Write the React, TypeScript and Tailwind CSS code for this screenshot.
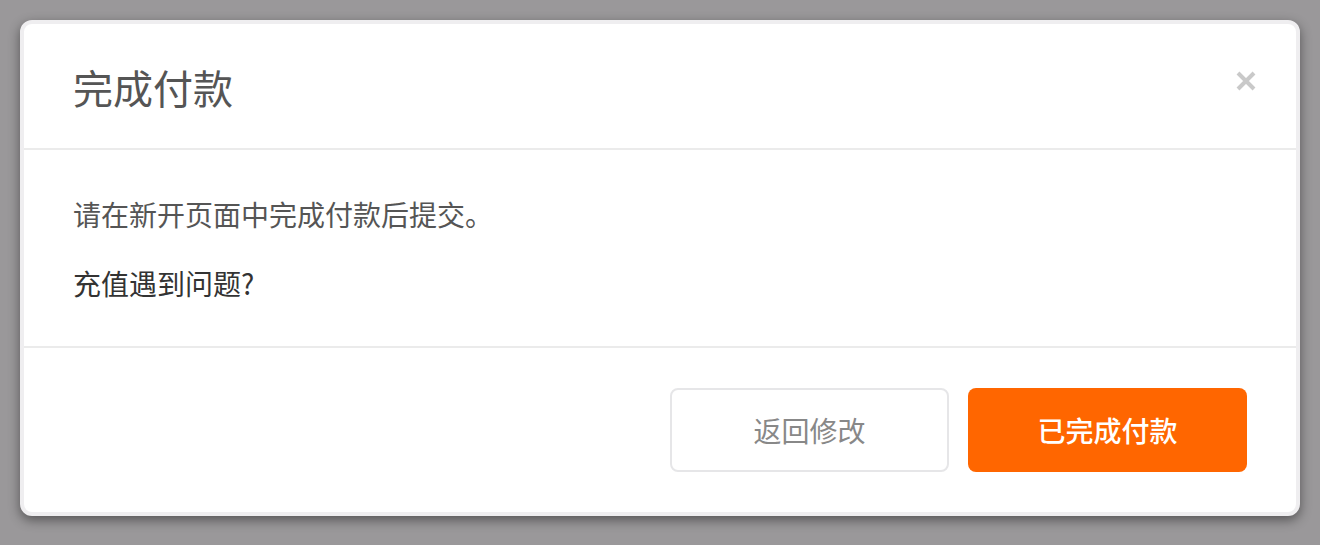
export default function App() {
  const font = { fontFamily: '"Noto Sans CJK SC", "Noto Sans", sans-serif' };

  return (
    <div className="w-[1320px] h-[545px] bg-[#9a989a] pt-[20px] px-[20px]" style={font}>
      <div className="w-[1280px] bg-white border-[4px] border-[#efeef0] rounded-[12px] shadow-[0_4px_12px_rgba(0,0,0,0.45)] overflow-hidden">
        {/* header */}
        <div className="h-[124px] flex items-center justify-between pl-[49px] pr-[40px] pt-[1px]">
          <h2 className="text-[40px] leading-none text-[#555555]">完成付款</h2>
          <button className="w-[20px] h-[20px] mb-[12px] flex items-center justify-center">
            <svg width="20" height="20" viewBox="0 0 20 20">
              <path d="M2 2 L18 18 M18 2 L2 18" stroke="#c9c9c9" strokeWidth="4" strokeLinecap="butt" />
            </svg>
          </button>
        </div>

        <div className="h-[2px] bg-[#ebebeb]" />

        {/* body */}
        <div className="h-[196px] pl-[49px] pt-[44px]">
          <p className="text-[28px] leading-[40px] text-[#555555]">请在新开页面中完成付款后提交。</p>
          <p className="text-[28px] leading-[40px] text-[#333333] mt-[29px]">充值遇到问题?</p>
        </div>

        <div className="h-[2px] bg-[#ebebeb]" />

        {/* footer */}
        <div className="h-[164px] flex justify-end items-start gap-[19px] pt-[40px] pr-[49px]">
          <button className="w-[279px] h-[84px] rounded-[8px] border-2 border-[#e6e6e8] bg-white text-[28px] text-[#888888]">
            返回修改
          </button>
          <button className="w-[279px] h-[84px] rounded-[8px] bg-[#ff6600] text-[28px] font-medium text-white">
            已完成付款
          </button>
        </div>
      </div>
    </div>
  );
}
